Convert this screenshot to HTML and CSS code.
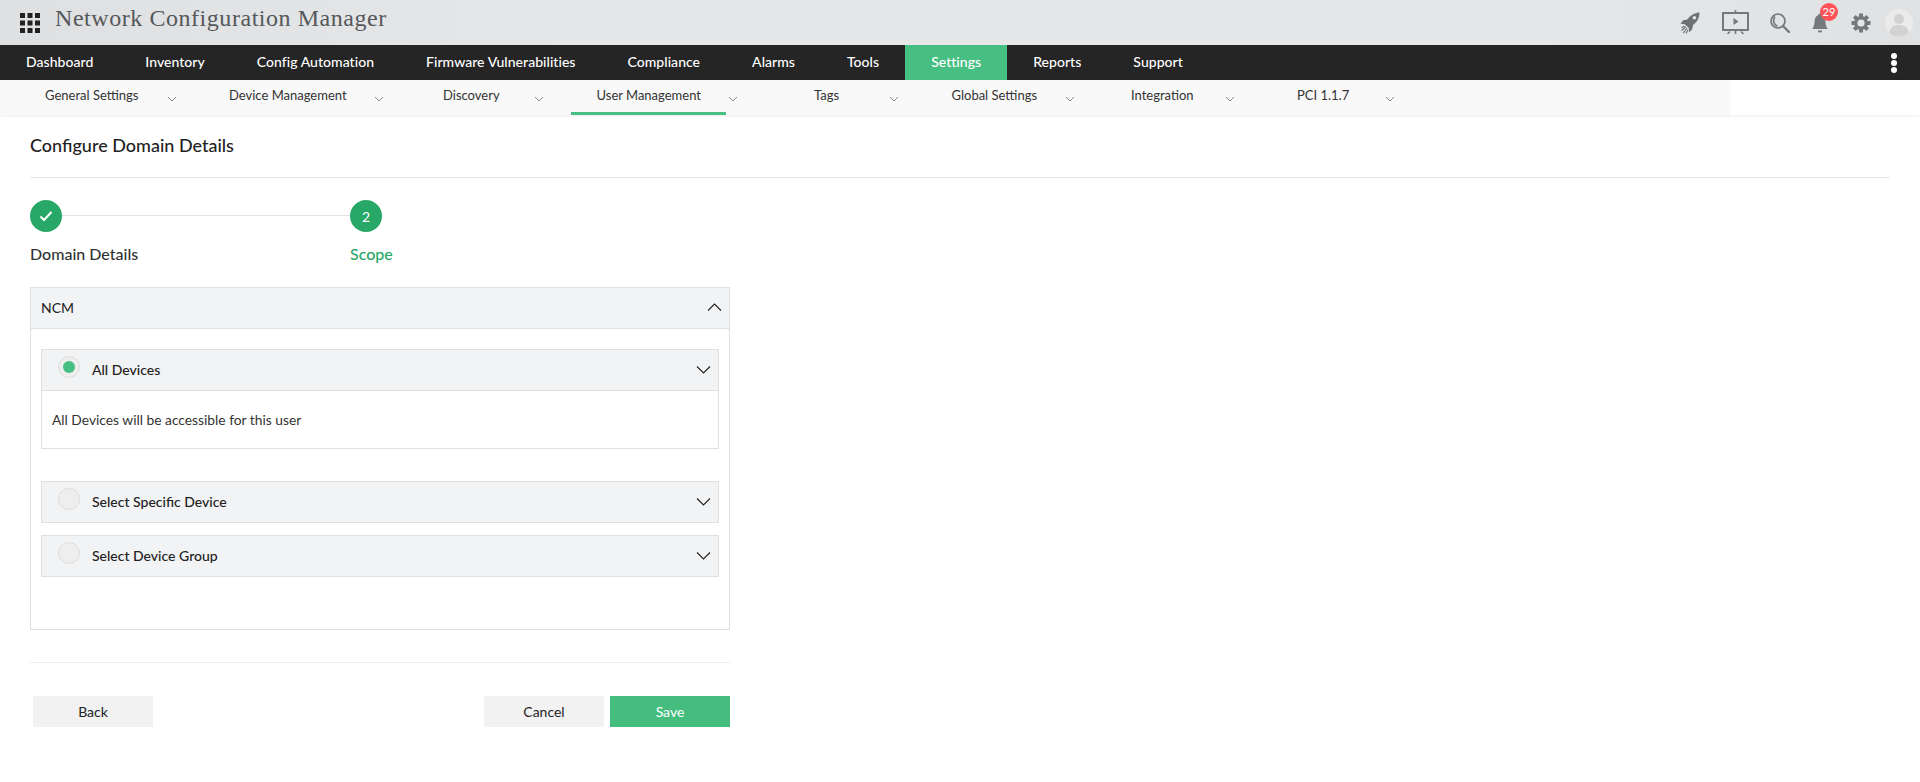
FILE: index.html
```html
<!DOCTYPE html>
<html lang="en">
<head>
<meta charset="utf-8">
<title>Network Configuration Manager</title>
<link rel="stylesheet" href="styles.css">
</head>
<body>
<header class="topbar">
  <svg class="apps" viewBox="0 0 20 20" width="20" height="20" fill="#222">
    <rect x="0" y="0" width="5" height="5"/><rect x="7.5" y="0" width="5" height="5"/><rect x="15" y="0" width="5" height="5"/>
    <rect x="0" y="7.5" width="5" height="5"/><rect x="7.5" y="7.5" width="5" height="5"/><rect x="15" y="7.5" width="5" height="5"/>
    <rect x="0" y="15" width="5" height="5"/><rect x="7.5" y="15" width="5" height="5"/><rect x="15" y="15" width="5" height="5"/>
  </svg>
  <div class="brand">Network Configuration Manager</div>
  <div class="tools">
    <svg class="tool tool-rocket" viewBox="0 0 20 22" width="20" height="22" fill="#6f7274">
      <path d="M19.5 0.2C14 1 9.800 3.500 7.200 7.600L3.200 8.300 0.500 11.800l4.300.4 4 3.800.200 4.400 3.200-3.200.800-4.300c4.300-2.900 6.500-7.200 6.500-12.700zM14.400 4a1.800 1.800 0 1 1 0 3.600 1.800 1.800 0 0 1 0-3.600z"/>
      <path d="M1.500 15.500l3-1.200M1.500 18.500l4.300-3.700M3.200 21l3.800-5M5.800 21.500l2.200-3.800" stroke="#6f7274" stroke-width="1.200" fill="none"/>
    </svg>
    <svg class="tool tool-board" viewBox="0 0 27 25" width="27" height="25" fill="none" stroke="#76797b">
      <path d="M13.500 0v3" stroke-width="1.600"/>
      <rect x="1" y="3" width="25" height="17" stroke-width="2"/>
      <path d="M11.500 8l5 3.500-5 3.500z" fill="#76797b" stroke="none"/>
      <path d="M13.500 20v4M8 21.500l-2.500 2.500M19 21.500l2.500 2.500" stroke-width="1.600"/>
    </svg>
    <svg class="tool tool-search" viewBox="0 0 20 20" width="20" height="20" fill="none" stroke="#76797b">
      <circle cx="8" cy="8" r="7" stroke-width="1.700"/>
      <path d="M5 3.600a6 6 0 0 0 2.500 9.600" stroke-width="1.700"/>
      <path d="M13 13l6 6" stroke-width="2.400" stroke-linecap="round"/>
    </svg>
    <span class="bell-wrap">
      <svg class="tool" viewBox="0 0 16 20" width="16" height="20" fill="#76797b">
        <path d="M8 0.500c1 0 1.600.7 1.600 1.600C12 3 13.200 5 13.400 8c.2 3.400.8 6 2.400 8H.2c1.600-2 2.200-4.600 2.400-8C2.800 5 4 3 6.400 2.100 6.400 1.200 7 .5 8 .5zM5.800 17.400h4.400a2.200 2.200 0 0 1-4.400 0z"/>
      </svg>
      <span class="badge">29</span>
    </span>
    <svg class="tool tool-gear" viewBox="0 0 20 20" width="20" height="20">
      <g stroke="#76797b" stroke-width="4">
        <path d="M10 0.500v19M0.500 10h19M3.300 3.300l13.400 13.400M16.700 3.300L3.300 16.700"/>
      </g>
      <circle cx="10" cy="10" r="7" fill="#76797b"/>
      <circle cx="10" cy="10" r="3.600" fill="#e5e6e8"/>
    </svg>
    <svg class="avatar" viewBox="0 0 28 28" width="28" height="28">
      <circle cx="14" cy="14" r="14" fill="#ebebeb"/>
      <circle cx="14" cy="10" r="5" fill="#d2d2d2"/>
      <path d="M4.500 24c0-5.500 4-8 9.500-8s9.500 2.500 9.500 8a14 14 0 0 1-19 0z" fill="#d2d2d2"/>
    </svg>
  </div>
</header>

<nav class="mainnav">
  <a class="nav-item">Dashboard</a>
  <a class="nav-item">Inventory</a>
  <a class="nav-item">Config Automation</a>
  <a class="nav-item">Firmware Vulnerabilities</a>
  <a class="nav-item">Compliance</a>
  <a class="nav-item">Alarms</a>
  <a class="nav-item">Tools</a>
  <a class="nav-item is-active">Settings</a>
  <a class="nav-item">Reports</a>
  <a class="nav-item">Support</a>
  <span class="kebab"><i></i><i></i><i></i></span>
</nav>

<div class="subnav-shell">
  <div class="subnav">
    <a class="sub s1">General Settings<svg class="sub-chev" viewBox="0 0 10 6" width="10" height="6"><path d="M1 1l4 4 4-4"/></svg></a>
    <a class="sub s2">Device Management<svg class="sub-chev" viewBox="0 0 10 6" width="10" height="6"><path d="M1 1l4 4 4-4"/></svg></a>
    <a class="sub s3">Discovery<svg class="sub-chev" viewBox="0 0 10 6" width="10" height="6"><path d="M1 1l4 4 4-4"/></svg></a>
    <a class="sub s4 is-active">User Management<svg class="sub-chev" viewBox="0 0 10 6" width="10" height="6"><path d="M1 1l4 4 4-4"/></svg></a>
    <a class="sub s5">Tags<svg class="sub-chev" viewBox="0 0 10 6" width="10" height="6"><path d="M1 1l4 4 4-4"/></svg></a>
    <a class="sub s6">Global Settings<svg class="sub-chev" viewBox="0 0 10 6" width="10" height="6"><path d="M1 1l4 4 4-4"/></svg></a>
    <a class="sub s7">Integration<svg class="sub-chev" viewBox="0 0 10 6" width="10" height="6"><path d="M1 1l4 4 4-4"/></svg></a>
    <a class="sub s8">PCI 1.1.7<svg class="sub-chev" viewBox="0 0 10 6" width="10" height="6"><path d="M1 1l4 4 4-4"/></svg></a>
  </div>
</div>

<main class="page">
  <h1 class="page-title">Configure Domain Details</h1>

  <div class="stepper">
    <div class="step step-done">
      <span class="step-dot">
        <svg viewBox="0 0 14 12" width="14" height="12" fill="none" stroke="#fff" stroke-width="2"><path d="M1.500 6.500l3.500 3.500 7.500-8"/></svg>
      </span>
      <span class="step-label">Domain Details</span>
    </div>
    <div class="step step-current">
      <span class="step-dot">2</span>
      <span class="step-label">Scope</span>
    </div>
  </div>

  <section class="panel">
    <div class="panel-head">
      <span>NCM</span>
      <svg class="chev" viewBox="0 0 14 8" width="15" height="8"><path d="M.5 7.500L7 1l6.500 6.500"/></svg>
    </div>
    <div class="panel-body">
      <div class="option">
        <div class="option-head">
          <span class="radio is-on"></span>
          <span class="option-label">All Devices</span>
          <svg class="chev" viewBox="0 0 14 8" width="15" height="8"><path d="M.5 .5L7 7l6.500-6.500"/></svg>
        </div>
        <div class="option-body">All Devices will be accessible for this user</div>
      </div>
      <div class="option">
        <div class="option-head">
          <span class="radio"></span>
          <span class="option-label">Select Specific Device</span>
          <svg class="chev" viewBox="0 0 14 8" width="15" height="8"><path d="M.5 .5L7 7l6.500-6.500"/></svg>
        </div>
      </div>
      <div class="option">
        <div class="option-head">
          <span class="radio"></span>
          <span class="option-label">Select Device Group</span>
          <svg class="chev" viewBox="0 0 14 8" width="15" height="8"><path d="M.5 .5L7 7l6.500-6.500"/></svg>
        </div>
      </div>
    </div>
  </section>

  <div class="actions">
    <button class="btn btn-back">Back</button>
    <div class="actions-right">
      <button class="btn">Cancel</button>
      <button class="btn btn-primary">Save</button>
    </div>
  </div>
</main>
</body>
</html>
```

FILE: styles.css
```css
* { box-sizing: border-box; }

html, body { height: 100%; }

body {
  margin: 0;
  background: #fff;
  color: #222;
  font-family: "Lato", "Liberation Sans", sans-serif;
  font-size: 14px;
  overflow: hidden;
}

/* top bar */
.topbar {
  height: 45px;
  display: flex;
  align-items: center;
  padding: 0 7px 0 20px;
  background: linear-gradient(90deg, #dfe0e2 0%, #e6e7e9 30%, #e6e7e9 80%, #dfe1e3 100%);
}

.apps { flex: none; }

.brand {
  margin-left: 15px;
  padding-bottom: 9px;
  font-family: "Liberation Serif", serif;
  font-size: 24px;
  letter-spacing: 0.55px;
  color: #55585a;
  white-space: nowrap;
}

.tools {
  margin-left: auto;
  display: flex;
  align-items: center;
}

.tool { display: block; }
.tool-board { margin-left: 22px; }
.tool-search { margin-left: 21px; }
.tool-gear { margin-left: 23px; }

.bell-wrap {
  position: relative;
  margin-left: 22px;
  display: block;
}

.badge {
  position: absolute;
  left: 8px;
  top: -10px;
  width: 18px;
  height: 18px;
  border-radius: 50%;
  background: #fb5358;
  color: #fff;
  font-size: 11px;
  line-height: 18px;
  text-align: center;
}

.avatar { margin-left: 14px; display: block; }

/* main nav */
.mainnav {
  height: 35px;
  display: flex;
  align-items: stretch;
  background: #252525;
}

.nav-item {
  padding: 0 26px 2px;
  line-height: 33px;
  color: #fff;
  font-size: 14px;
  font-weight: 500;
  letter-spacing: 0.04px;
  white-space: nowrap;
}

.nav-item.is-active { background: #48bf82; }

.kebab {
  margin-left: auto;
  width: 29px;
  display: flex;
  flex-direction: column;
  justify-content: center;
  gap: 1px;
}

.kebab i {
  display: block;
  width: 6px;
  height: 6px;
  border-radius: 50%;
  background: #fff;
}

/* sub nav */
.subnav-shell {
  height: 35px;
  box-shadow: 0 1px 3px rgba(0, 0, 0, 0.08);
}

.subnav {
  width: 1730px;
  height: 35px;
  display: flex;
  background: #f9f9f9;
}

.sub {
  position: relative;
  flex: none;
  display: flex;
  align-items: center;
  padding-bottom: 6px;
  color: #333;
  font-size: 13px;
  white-space: nowrap;
}

.s1 { width: 177px; padding-left: 45px; }
.s2 { width: 207px; padding-left: 52px; }
.s3 { width: 160px; padding-left: 59px; }
.s4 { width: 194px; padding-left: 52.5px; }
.s5 { width: 161px; padding-left: 76px; }
.s6 { width: 176px; padding-left: 52.5px; }
.s7 { width: 160px; padding-left: 56px; }
.s8 { width: 160px; padding-left: 62px; }

.sub.is-active::after {
  content: "";
  position: absolute;
  left: 27px;
  bottom: 0;
  width: 155px;
  height: 3px;
  background: #48bf82;
}

.sub-chev {
  margin-left: auto;
  margin-top: 9px;
  fill: none;
  stroke: #8a8a8a;
  stroke-width: 1;
}

/* page */
.page { padding: 0 30px; }

.page-title {
  margin: 0;
  height: 63px;
  padding-top: 19px;
  border-bottom: 1px solid #e4e4e4;
  font-size: 18px;
  line-height: 22px;
  font-weight: 500;
  color: #222;
}

/* stepper */
.stepper {
  position: relative;
  width: 320px;
  margin-top: 22px;
  display: flex;
  height: 87px;
}

.stepper::before {
  content: "";
  position: absolute;
  left: 32px;
  top: 15px;
  width: 288px;
  height: 1px;
  background: #e2e2e2;
}

.step {
  position: relative;
  width: 320px;
  flex: none;
  display: flex;
  flex-direction: column;
  align-items: flex-start;
}

.step-dot {
  width: 32px;
  height: 32px;
  border-radius: 50%;
  background: #27a866;
  color: #fff;
  font-size: 14px;
  display: flex;
  align-items: center;
  justify-content: center;
}

.step-label {
  margin-top: 12px;
  font-size: 16px;
  line-height: 20px;
  font-weight: 500;
  color: #333;
}

.step-current .step-label { color: #27a866; }

/* panel */
.panel {
  width: 700px;
  height: 343px;
  border: 1px solid #dfdfdf;
}

.panel-head {
  height: 41px;
  display: flex;
  align-items: center;
  justify-content: space-between;
  padding: 0 7px 2px 10px;
  background: #f2f3f5;
  border-bottom: 1px solid #dfdfdf;
  font-size: 14px;
  color: #222;
}

.chev {
  flex: none;
  fill: none;
  stroke: #222;
  stroke-width: 1.1;
}

.panel-body { padding: 20px 10px 0 10px; }

.option { margin-bottom: 12px; }
.option:first-child { margin-bottom: 32px; }

.option-head {
  height: 42px;
  display: flex;
  align-items: center;
  padding: 0 7px 0 16px;
  background: #f2f3f5;
  border: 1px solid #e0e0e0;
}

.radio {
  flex: none;
  position: relative;
  width: 22px;
  height: 22px;
  margin-top: -6px;
  border-radius: 50%;
  background: #eee;
  border: 1px solid #ddd;
}

.radio.is-on::after {
  content: "";
  position: absolute;
  left: 4px;
  top: 4px;
  width: 12px;
  height: 12px;
  border-radius: 50%;
  background: #48bf82;
}

.option-label {
  margin-left: 12px;
  padding-bottom: 2px;
  flex: 1;
  font-size: 14px;
  font-weight: 500;
  color: #222;
}

.option-body {
  height: 58px;
  padding: 0 10px;
  display: flex;
  align-items: center;
  border: 1px solid #e0e0e0;
  border-top: 0;
  font-size: 13.8px;
  color: #333;
}

/* actions */
.actions {
  width: 700px;
  margin-top: 32px;
  padding: 33px 0 0 3px;
  border-top: 1px solid #eee;
  display: flex;
  justify-content: space-between;
}

.actions-right { display: flex; gap: 6px; }

.btn {
  width: 120px;
  height: 31px;
  padding: 0;
  border: 0;
  background: #f2f2f2;
  color: #222;
  font-family: inherit;
  font-size: 14px;
}

.btn-primary { background: #45bd7f; color: #fff; }
```
